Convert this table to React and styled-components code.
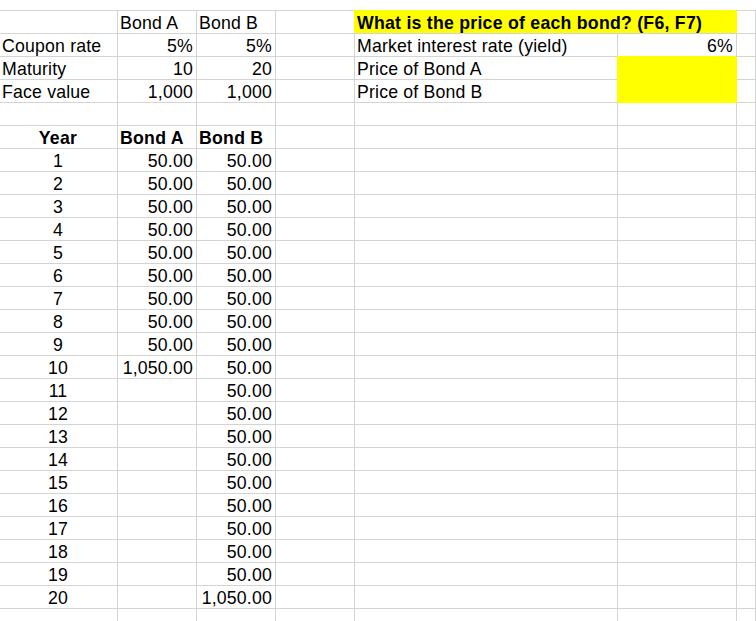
import React from 'react'
import styled, { createGlobalStyle } from 'styled-components'

const GRID = '#d4d4d4'
const YELLOW = '#ffff00'

const GlobalStyle = createGlobalStyle`
  html, body {
    margin: 0;
    padding: 0;
    background: #fff;
  }
  body {
    font-family: "Liberation Sans", Arial, sans-serif;
    color: #000;
    overflow: hidden;
  }
`

const Page = styled.div`
  width: 756px;
  height: 621px;
  overflow: hidden;
  padding-top: 10px;
  box-sizing: border-box;
`

const Sheet = styled.div`
  display: grid;
  grid-template-columns: 118px 79px 79px 79px 263px 119px 1fr;
  grid-auto-rows: 23px;
  border-top: 1px solid ${GRID};
`

const Cell = styled.div`
  box-sizing: border-box;
  border-right: 1px solid ${props => (props.$fill ? YELLOW : GRID)};
  border-bottom: 1px solid ${props => (props.$fillDown ? YELLOW : GRID)};
  padding: 3px 3px 0 2px;
  font-size: 17.7px;
  line-height: 19px;
  letter-spacing: ${props => (props.$bold ? '0.25px' : '0.18px')};
  white-space: nowrap;
  text-align: ${props => props.$align || 'left'};
  font-weight: ${props => (props.$bold ? 700 : 400)};
  background: ${props => (props.$fill ? YELLOW : 'transparent')};
  box-shadow: ${props => (props.$fill ? `-1px -1px 0 ${YELLOW}` : 'none')};
  grid-column: ${props => (props.$span ? `span ${props.$span}` : 'auto')};
`

const Blank = () => <Cell />

const TopBlock = () => (
  <>
    <Blank />
    <Cell>Bond A</Cell>
    <Cell>Bond B</Cell>
    <Blank />
    <Cell $span={2} $fill $bold>What is the price of each bond? (F6, F7)</Cell>
    <Blank />

    <Cell>Coupon rate</Cell>
    <Cell $align="right">5%</Cell>
    <Cell $align="right">5%</Cell>
    <Blank />
    <Cell>Market interest rate (yield)</Cell>
    <Cell $align="right">6%</Cell>
    <Blank />

    <Cell>Maturity</Cell>
    <Cell $align="right">10</Cell>
    <Cell $align="right">20</Cell>
    <Blank />
    <Cell>Price of Bond A</Cell>
    <Cell $fill $fillDown />
    <Blank />

    <Cell>Face value</Cell>
    <Cell $align="right">1,000</Cell>
    <Cell $align="right">1,000</Cell>
    <Blank />
    <Cell>Price of Bond B</Cell>
    <Cell $fill $fillDown />
    <Blank />
  </>
)

const EmptyRow = () => (
  <>
    {Array.from({ length: 7 }, (_, i) => <Blank key={i} />)}
  </>
)

const years = Array.from({ length: 20 }, (_, i) => i + 1)

const flow = (year, maturity) => {
  if (year < maturity) return '50.00'
  if (year === maturity) return '1,050.00'
  return ''
}

const CashFlows = () => (
  <>
    <Cell $align="center" $bold>Year</Cell>
    <Cell $bold>Bond A</Cell>
    <Cell $bold>Bond B</Cell>
    <Blank />
    <Blank />
    <Blank />
    <Blank />
    {years.map(y => (
      <React.Fragment key={y}>
        <Cell $align="center">{y}</Cell>
        <Cell $align="right">{flow(y, 10)}</Cell>
        <Cell $align="right">{flow(y, 20)}</Cell>
        <Blank />
        <Blank />
        <Blank />
        <Blank />
      </React.Fragment>
    ))}
  </>
)

export default function App() {
  return (
    <>
      <GlobalStyle />
      <Page>
        <Sheet>
          <TopBlock />
          <EmptyRow />
          <CashFlows />
          <EmptyRow />
        </Sheet>
      </Page>
    </>
  )
}
